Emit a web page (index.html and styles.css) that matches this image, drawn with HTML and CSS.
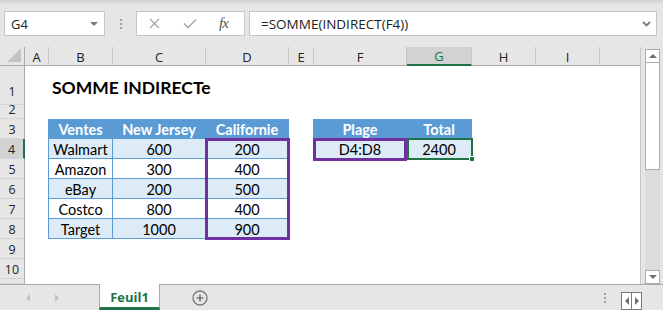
FILE: index.html
```html
<!DOCTYPE html>
<html lang="fr">
<head>
  <meta charset="UTF-8">
  <title>SOMME INDIRECT</title>
  <link rel="stylesheet" href="styles.css">
</head>
<body>
<div class="toolbar">
  <div class="namebox">
    <span>G4</span>
    <span class="caret"></span>
  </div>
  <div class="grip"><i></i><i></i><i></i></div>
  <div class="fxbox">
    <svg class="ico-x" width="11" height="11" viewBox="0 0 11 11"><path d="M1 1L10 10M10 1L1 10" stroke="#a8a8a8" stroke-width="1.4" fill="none"/></svg>
    <svg class="ico-ok" width="14" height="11" viewBox="0 0 14 11"><path d="M1 5.5l4 4L13 1.5" stroke="#a8a8a8" stroke-width="1.6" fill="none"/></svg>
    <span class="fx">fx</span>
  </div>
  <div class="formula">
    <span>=SOMME(INDIRECT(F4))</span>
    <svg width="9" height="6" viewBox="0 0 9 6"><path d="M1 1l3.5 3.5L8 1" stroke="#7a7a7a" stroke-width="1.8" fill="none"/></svg>
  </div>
</div>

<div class="main">
  <div class="sheet">
    <!-- en-tetes de colonnes -->
    <div class="corner"><svg width="14" height="14" viewBox="0 0 14 14"><path d="M14 0V14H0Z" fill="#c3c3c3"/></svg></div>
    <div class="ch">A</div>
    <div class="ch">B</div>
    <div class="ch">C</div>
    <div class="ch">D</div>
    <div class="ch">E</div>
    <div class="ch">F</div>
    <div class="ch on">G</div>
    <div class="ch">H</div>
    <div class="ch">I</div>
    <div class="ch last"></div>

    <!-- numeros de lignes -->
    <div class="rh tall" style="grid-row:2">1</div>
    <div class="rh" style="grid-row:3">2</div>
    <div class="rh" style="grid-row:4">3</div>
    <div class="rh on" style="grid-row:5">4</div>
    <div class="rh" style="grid-row:6">5</div>
    <div class="rh" style="grid-row:7">6</div>
    <div class="rh" style="grid-row:8">7</div>
    <div class="rh" style="grid-row:9">8</div>
    <div class="rh" style="grid-row:10">9</div>
    <div class="rh" style="grid-row:11">10</div>
    <div class="rh" style="grid-row:12"></div>

    <div class="title">SOMME INDIRECTe</div>

    <!-- tableau des ventes -->
    <div class="t hd first" style="grid-area:4/3">Ventes</div>
    <div class="t hd" style="grid-area:4/4">New Jersey</div>
    <div class="t hd" style="grid-area:4/5">Californie</div>

    <div class="t band first" style="grid-area:5/3">Walmart</div>
    <div class="t band" style="grid-area:5/4">600</div>
    <div class="t band" style="grid-area:5/5">200</div>

    <div class="t first" style="grid-area:6/3">Amazon</div>
    <div class="t" style="grid-area:6/4">300</div>
    <div class="t" style="grid-area:6/5">400</div>

    <div class="t band first" style="grid-area:7/3">eBay</div>
    <div class="t band" style="grid-area:7/4">200</div>
    <div class="t band" style="grid-area:7/5">500</div>

    <div class="t first" style="grid-area:8/3">Costco</div>
    <div class="t" style="grid-area:8/4">800</div>
    <div class="t" style="grid-area:8/5">400</div>

    <div class="t band first" style="grid-area:9/3">Target</div>
    <div class="t band" style="grid-area:9/4">1000</div>
    <div class="t band" style="grid-area:9/5">900</div>

    <!-- plage / total -->
    <div class="t hd first" style="grid-area:4/7">Plage</div>
    <div class="t hd" style="grid-area:4/8">Total</div>
    <div class="t band first" style="grid-area:5/7">D4:D8</div>
    <div class="t band" style="grid-area:5/8">2400</div>

    <div class="box-range"></div>
    <div class="box-ref"></div>
    <div class="box-active"><span class="handle"></span></div>
  </div>

  <div class="vscroll">
    <div class="sbtn"><span class="tri-up"></span></div>
    <div class="thumb"></div>
    <div class="track"></div>
    <div class="sbtn"><span class="tri-down"></span></div>
  </div>
</div>

<div class="tabbar">
  <div class="nav">
    <span class="tri-l"></span>
    <span class="tri-r"></span>
  </div>
  <div class="tab">Feuil1</div>
  <div class="add">
    <svg width="16" height="16" viewBox="0 0 16 16"><circle cx="8" cy="8" r="7" stroke="#777" stroke-width="1.3" fill="none"/><path d="M8 4.5v7M4.5 8h7" stroke="#777" stroke-width="1.6"/></svg>
  </div>
  <div class="spacer"></div>
  <div class="grip grip-b"><i></i><i></i><i></i></div>
  <div class="hbtns">
    <span class="hb"><span class="tri-l dark"></span></span>
    <span class="hb"><span class="tri-r dark"></span></span>
  </div>
</div>
</body>
</html>
```

FILE: styles.css
```css
* {
  box-sizing: border-box;
}
body {
  margin: 0;
  width: 663px;
  height: 310px;
  overflow: hidden;
  background: #e6e6e6;
  font-family: "Open Sans", "Noto Sans", sans-serif;
  color: #222;
}

/* barre de formule */
.toolbar {
  height: 47px;
  display: flex;
  align-items: flex-start;
  padding: 11px 0 0 4px;
  background: linear-gradient(#d2d2d2, #e6e6e6 5px);
}
.namebox {
  width: 101px;
  height: 25px;
  background: #fff;
  border: 1px solid #c6c6c6;
  display: flex;
  align-items: center;
  justify-content: space-between;
  padding: 0 6px 0 6px;
  font-size: 13px;
}
.caret {
  width: 0;
  height: 0;
  border-left: 4px solid transparent;
  border-right: 4px solid transparent;
  border-top: 4px solid #7a7a7a;
}
.grip {
  display: flex;
  flex-direction: column;
  gap: 2px;
  width: 2px;
  margin: 8px 14px 0 15px;
}
.grip i {
  display: block;
  width: 2px;
  height: 2px;
  background: #a0a0a0;
}
.fxbox {
  width: 109px;
  height: 25px;
  background: #fff;
  border: 1px solid #c6c6c6;
  display: flex;
  align-items: center;
}
.ico-x {
  margin-left: 12px;
}
.ico-ok {
  margin-left: 23px;
}
.fx {
  margin-left: 22px;
  font-family: "Liberation Serif", serif;
  font-style: italic;
  font-size: 15px;
  color: #555;
  letter-spacing: -1px;
}
.formula {
  width: 408px;
  height: 25px;
  margin-left: 4px;
  background: #fff;
  border: 1px solid #c6c6c6;
  display: flex;
  align-items: center;
  justify-content: space-between;
  padding: 0 5px 0 11px;
  font-size: 13.5px;
}

/* feuille */
.main {
  display: flex;
  height: 237px;
}
.sheet {
  width: 641px;
  display: grid;
  grid-template-columns: 25px 24px 64px 93px 83px 25px 93px 65px 64px 64px 1fr;
  grid-template-rows: 19px 39px 14px repeat(8, 20px) 1fr;
  background: #fff;
  border-right: 1px solid #c6c6c6;
}
.corner {
  background: #e6e6e6;
  border-right: 1px solid #ababab;
  border-bottom: 1px solid #ababab;
  display: flex;
  align-items: flex-end;
  justify-content: flex-end;
  padding: 0 3px 3px 0;
}
.ch {
  background: #e6e6e6;
  border-right: 1px solid #c6c6c6;
  border-bottom: 1px solid #ababab;
  display: flex;
  align-items: center;
  justify-content: center;
  font-size: 13px;
  padding-top: 1px;
}
.ch.last {
  border-right: none;
}
.ch.on {
  background: #d2d2d2;
  color: #217346;
  border-bottom: 2px solid #217346;
}
.rh {
  grid-column: 1;
  background: #e6e6e6;
  border-right: 1px solid #ababab;
  border-bottom: 1px solid #d4d4d4;
  display: flex;
  align-items: flex-end;
  justify-content: center;
  font-size: 12.5px;
  line-height: 12px;
  padding-bottom: 2px;
}
.rh.tall {
  padding-bottom: 6px;
}
.rh.on {
  background: #d2d2d2;
  border-right: 2px solid #217346;
}

.title {
  grid-column: 3 / span 4;
  grid-row: 2;
  align-self: end;
  padding: 0 0 7px 3px;
  font-family: Lato, "Liberation Sans", sans-serif;
  font-weight: bold;
  font-size: 17.5px;
  color: #000;
}

.t {
  display: flex;
  align-items: center;
  justify-content: center;
  font-family: Lato, "Liberation Sans", sans-serif;
  font-size: 14.5px;
  color: #000;
  border-right: 1px solid #5b9bd5;
  border-bottom: 1px solid #5b9bd5;
  padding-top: 1px;
}
.t.first {
  border-left: 1px solid #5b9bd5;
  margin-left: -1px;
}
.t.hd {
  background: #5b9bd5;
  color: #fff;
  font-weight: bold;
  border-right-color: #5b9bd5;
}
.t.band {
  background: #ddebf7;
}

.box-range {
  grid-column: 5;
  grid-row: 5 / span 5;
  margin: -1px -1px -1px -1px;
  border: 3px solid #7030a0;
}
.box-ref {
  grid-column: 7;
  grid-row: 5;
  margin: -1px 0 -2px -1px;
  border: 3px solid #7030a0;
}
.box-active {
  grid-column: 8;
  grid-row: 5;
  margin: -1px -1px -1px 0;
  border: 2px solid #217346;
  position: relative;
}
.handle {
  position: absolute;
  right: -4px;
  bottom: -4px;
  width: 6px;
  height: 6px;
  background: #217346;
  border: 1px solid #fff;
}

/* ascenseur vertical */
.vscroll {
  width: 22px;
  padding: 2px 3px 0 4px;
  display: flex;
  flex-direction: column;
}
.sbtn {
  height: 14px;
  background: #fff;
  border: 1px solid #ababab;
  display: flex;
  align-items: center;
  justify-content: center;
}
.thumb {
  height: 107px;
  background: #fff;
  border: 1px solid #ababab;
  border-top: none;
}
.track {
  flex: 1;
  background: #dcdcdc;
}
.tri-up,
.tri-down {
  width: 0;
  height: 0;
  border-left: 4px solid transparent;
  border-right: 4px solid transparent;
}
.tri-up {
  border-bottom: 4px solid #6d6d6d;
}
.tri-down {
  border-top: 4px solid #6d6d6d;
}

/* onglets */
.tabbar {
  height: 26px;
  display: flex;
  border-top: 1px solid #ababab;
}
.nav {
  width: 99px;
  display: flex;
  align-items: center;
  gap: 25px;
  padding-left: 26px;
}
.tri-l,
.tri-r {
  width: 0;
  height: 0;
  border-top: 4px solid transparent;
  border-bottom: 4px solid transparent;
}
.tri-l {
  border-right: 4px solid #c3c3c3;
}
.tri-r {
  border-left: 4px solid #c3c3c3;
}
.tri-l.dark {
  border-right-color: #6d6d6d;
}
.tri-r.dark {
  border-left-color: #6d6d6d;
}
.tab {
  width: 61px;
  margin-top: -1px;
  background: #fff;
  border-left: 1px solid #ababab;
  border-right: 1px solid #ababab;
  border-bottom: 3px solid #217346;
  display: flex;
  align-items: center;
  justify-content: center;
  font-size: 13px;
  font-weight: bold;
  color: #217346;
  padding-top: 2px;
}
.add {
  margin-left: 32px;
  display: flex;
  align-items: center;
}
.spacer {
  flex: 1;
}
.grip-b {
  margin: 8px 15px 0 0;
}
.hbtns {
  display: flex;
  margin: 7px 21px 0 0;
  height: 18px;
}
.hb {
  width: 11px;
  height: 18px;
  background: #fff;
  border: 1px solid #7a7a7a;
  display: flex;
  align-items: center;
  justify-content: center;
}
.hb + .hb {
  border-left: 1px solid #7a7a7a;
  margin-left: -1px;
}
```
